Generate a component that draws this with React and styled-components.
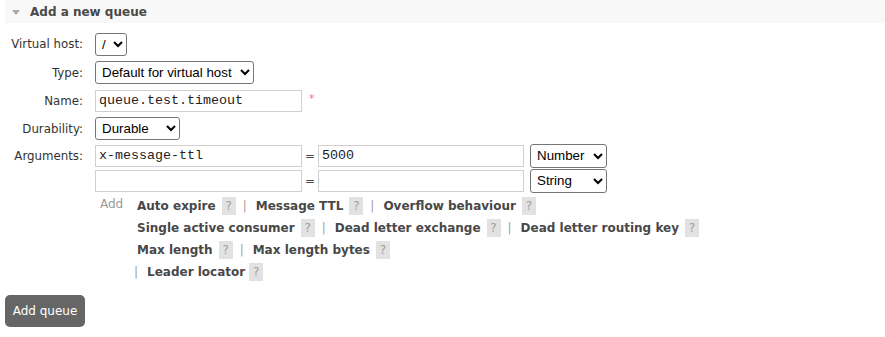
import React, { useState } from "react";
import styled, { createGlobalStyle } from "styled-components";

const GlobalStyle = createGlobalStyle`
  html, body {
    margin: 0;
    padding: 0;
    background: #ffffff;
  }
  body {
    font-family: "DejaVu Sans", Verdana, sans-serif;
    font-size: 12px;
    color: #484848;
  }
`;

const Page = styled.div`
  width: 885px;
  height: 337px;
  overflow: hidden;
`;

const SectionHeader = styled.div`
  margin-left: 5px;
  height: 23px;
  background: #f8f8f8;
  display: flex;
  align-items: center;
  padding-left: 7px;
`;

const Arrow = styled.span`
  width: 0;
  height: 0;
  border-left: 4px solid transparent;
  border-right: 4px solid transparent;
  border-top: 5px solid #a8a8a8;
  margin-right: 10px;
  margin-top: 1px;
`;

const HeaderTitle = styled.h2`
  margin: 0;
  font-size: 12px;
  font-weight: bold;
  color: #484848;
`;

const Form = styled.div`
  display: grid;
  grid-template-columns: 83px 1fr;
  column-gap: 12px;
  padding-top: 7px;
`;

const Label = styled.div`
  height: ${p => p.h}px;
  display: flex;
  align-items: center;
  justify-content: flex-end;
  font-size: 11.8px;
  color: #333;
  white-space: nowrap;
`;

const Cell = styled.div`
  height: ${p => p.h}px;
  display: flex;
  align-items: center;
`;

const Select = styled.select`
  font-family: "Liberation Sans", Arial, sans-serif;
  font-size: 13.33px;
  color: #000;
  height: 23px;
  width: ${p => p.w}px;
  border: 1px solid #767676;
  border-radius: 3px;
  background: #fff;
  padding: 0 2px;
  margin: 0;
`;

const TextInput = styled.input`
  font-family: "Liberation Mono", "Courier New", monospace;
  font-size: 13.33px;
  color: #222;
  height: 22px;
  width: ${p => p.w}px;
  box-sizing: border-box;
  border: 1px solid #d0d0d0;
  padding: 1px 3px;
  margin: 0;
  outline: none;
`;

const Required = styled.span`
  color: #f77;
  font-size: 11px;
  margin-left: 7px;
  align-self: flex-start;
  margin-top: 5px;
`;

const Equals = styled.span`
  width: 16px;
  text-align: center;
  font-size: 12px;
  color: #484848;
`;

const TypeSelect = styled(Select)`
  margin-left: 6px;
  height: 24px;
`;

const AddCell = styled.div`
  display: flex;
  padding-top: 2px;
  padding-bottom: 12px;
`;

const AddWord = styled.span`
  color: #999;
  width: 42px;
  flex-shrink: 0;
  padding-left: 5px;
  box-sizing: border-box;
  line-height: 18px;
  font-size: 12px;
`;

const LinkLines = styled.div`
  display: flex;
  flex-direction: column;
`;

const LinkLine = styled.div`
  display: flex;
  align-items: center;
  height: 22px;
  margin-left: ${p => p.indent || 0}px;
`;

const ArgLink = styled.span`
  font-weight: bold;
  font-size: 12px;
  color: #484848;
  cursor: pointer;
  white-space: nowrap;
`;

const Help = styled.span`
  display: inline-flex;
  align-items: center;
  justify-content: center;
  width: 14px;
  height: 18px;
  background: #e2e2e2;
  color: #a0a0a0;
  font-size: 12px;
  margin-left: ${p => (p.tight ? 4 : 6)}px;
`;

const Sep = styled.span`
  color: #a0a0a0;
  margin: ${p => (p.lead ? "0 9px 0 0" : "0 9px 0 7px")};
`;

const AddButton = styled.button`
  margin: 0 0 0 5px;
  width: 80px;
  height: 32px;
  background: #666;
  color: #fff;
  border: none;
  border-radius: 5px;
  font-family: "DejaVu Sans", Verdana, sans-serif;
  font-size: 12px;
  padding: 0;
  cursor: pointer;
`;

const lines = [
  { items: ["Auto expire", "Message TTL", "Overflow behaviour"] },
  { items: ["Single active consumer", "Dead letter exchange", "Dead letter routing key"] },
  { items: ["Max length", "Max length bytes"] },
  { items: ["Leader locator"], lead: true }
];

const ArgumentLinks = () => (
  <LinkLines>
    {lines.map((line, i) => (
      <LinkLine key={i} indent={line.lead ? -3 : 0}>
        {line.lead && <Sep lead>|</Sep>}
        {line.items.map((name, j) => (
          <React.Fragment key={name}>
            {j > 0 && <Sep>|</Sep>}
            <ArgLink>{name}</ArgLink>
            <Help tight={line.lead}>?</Help>
          </React.Fragment>
        ))}
      </LinkLine>
    ))}
  </LinkLines>
);

const App = () => {
  const [name, setName] = useState("queue.test.timeout");
  const [argKey, setArgKey] = useState("x-message-ttl");
  const [argVal, setArgVal] = useState("5000");

  return (
    <Page>
      <GlobalStyle />
      <SectionHeader>
        <Arrow />
        <HeaderTitle>Add a new queue</HeaderTitle>
      </SectionHeader>

      <Form>
        <Label h={28}>Virtual host:</Label>
        <Cell h={28}>
          <Select w={32}>
            <option>/</option>
          </Select>
        </Cell>

        <Label h={29}>Type:</Label>
        <Cell h={29}>
          <Select w={159}>
            <option>Default for virtual host</option>
            <option>Classic</option>
            <option>Quorum</option>
            <option>Stream</option>
          </Select>
        </Cell>

        <Label h={27}>Name:</Label>
        <Cell h={27}>
          <TextInput w={207} value={name} onChange={e => setName(e.target.value)} />
          <Required>*</Required>
        </Cell>

        <Label h={29}>Durability:</Label>
        <Cell h={29}>
          <Select w={85}>
            <option>Durable</option>
            <option>Transient</option>
          </Select>
        </Cell>

        <Label h={25}>Arguments:</Label>
        <Cell h={25}>
          <TextInput w={207} value={argKey} onChange={e => setArgKey(e.target.value)} />
          <Equals>=</Equals>
          <TextInput w={206} value={argVal} onChange={e => setArgVal(e.target.value)} />
          <TypeSelect w={77}>
            <option>Number</option>
            <option>String</option>
            <option>Boolean</option>
            <option>List</option>
          </TypeSelect>
        </Cell>

        <Label h={25} />
        <Cell h={25}>
          <TextInput w={207} defaultValue="" />
          <Equals>=</Equals>
          <TextInput w={206} defaultValue="" />
          <TypeSelect w={77}>
            <option>String</option>
            <option>Number</option>
            <option>Boolean</option>
            <option>List</option>
          </TypeSelect>
        </Cell>

        <div />
        <AddCell>
          <AddWord>Add</AddWord>
          <ArgumentLinks />
        </AddCell>
      </Form>

      <AddButton>Add queue</AddButton>
    </Page>
  );
};

export default App;
